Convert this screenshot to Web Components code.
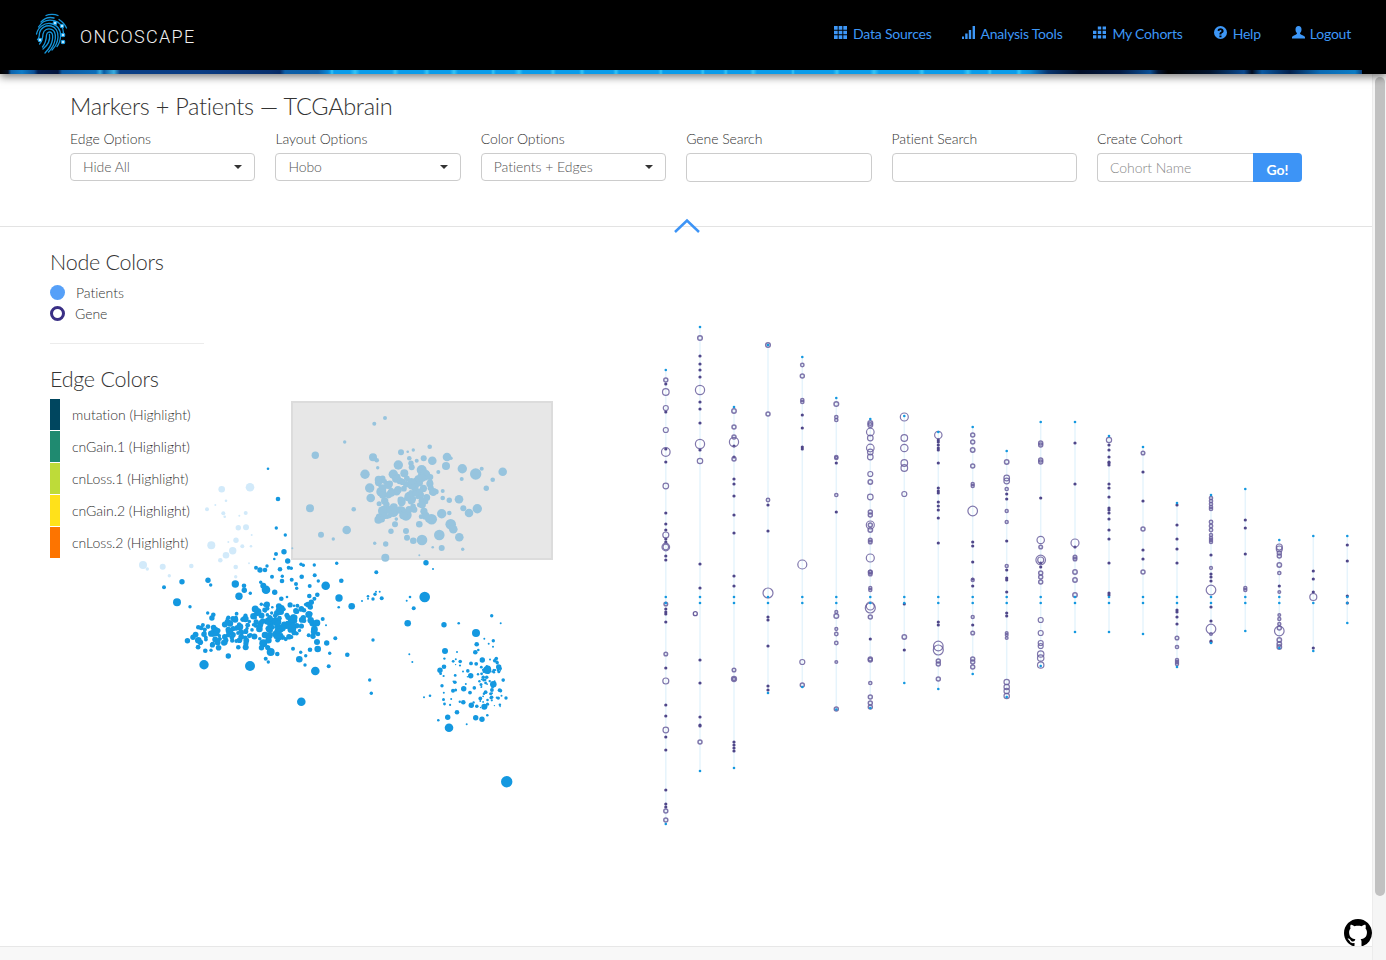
<!DOCTYPE html>
<html>
<head>
<meta charset="utf-8">
<title>Oncoscape</title>
<style>
  html, body { margin: 0; height: 100%; overflow: hidden; background: #fff; }
  body { font-family: "Lato", "Liberation Sans", sans-serif; font-weight: 300; color: #333; }
</style>
</head>
<body>
<onco-app></onco-app>

<script>
// small seeded random so the dense clusters stay the same between runs
function seeded(a) {
  return function () {
    a = (a + 0x6D2B79F5) | 0;
    let t = Math.imul(a ^ (a >>> 15), 1 | a);
    t = (t + Math.imul(t ^ (t >>> 7), 61 | t)) ^ t;
    return ((t ^ (t >>> 14)) >>> 0) / 4294967296;
  };
}

// the thin textured strip under the nav, as one horizontal gradient
function bandGradient() {
  const rnd = seeded(7);
  const stops = ['#000 0', '#020a1c 8px', '#0c62ac 11px', '#0e7cc8 22px', '#0a4f96 34px', '#031c4e 38px', '#03143c 58px', '#0b5aa4 62px', '#0d6db8 96px', '#35a6dc 100px', '#0a5aa0 104px', '#3aaee0 114px', '#0a3f86 120px', '#0a3c84 200px', '#08306e 270px', '#062a66 280px', '#0c5fa8 285px', '#0a5ca6 318px', '#0a86d4 328px'];
  let x = 330;
  while (x < 1020) {
    const w = 4 + rnd() * 6;
    stops.push(`#0a9cea ${x.toFixed(0)}px`, `#35c4f6 ${(x + w / 2).toFixed(0)}px`, `#0a9cea ${(x + w).toFixed(0)}px`);
    x += w + 14 + rnd() * 26;
  }
  stops.push('#0b8ed8 1030px', '#0a6eb8 1036px', '#07346e 1048px', '#020e28 1080px', '#031a44 1120px', '#0a4f96 1150px', '#041634 1158px', '#000 1168px', '#02142e 1210px', '#0a4a90 1244px', '#020a1c 1252px', '#0a5aa4 1262px', '#03204c 1290px', '#0b6ab4 1320px', '#0c7cc4 1355px', '#0a3f7c 1362px');
  return `linear-gradient(90deg, ${stops.join(', ')})`;
}

class OncoNavLink extends HTMLElement {
  constructor() {
    super();
    this.attachShadow({ mode: 'open' });
    this.shadowRoot.innerHTML = `
      <style>
        :host { display: flex; align-items: center; gap: 6px; color: #3d97f7; font-size: 14px; font-weight: 400; letter-spacing: -.22px; }
        ::slotted(svg) { display: block; width: 13px; height: 13px; fill: #3d97f7; flex: none; margin-top: -1px; }
      </style>
      <slot name="icon"></slot><slot></slot>`;
  }
}
customElements.define('onco-nav-link', OncoNavLink);

class OncoNav extends HTMLElement {
  constructor() {
    super();
    this.attachShadow({ mode: 'open' });
    this.shadowRoot.innerHTML = `
      <style>
        :host { display: block; background: #000; position: relative; z-index: 2; box-shadow: 0 3px 8px rgba(0,0,0,.5); }
        .top { height: 70px; display: flex; align-items: flex-start; padding-left: 35px; box-sizing: border-box; }
        .logo { display: block; width: 33px; height: 42px; margin-top: 13px; }
        .brand { color: #f0f0f0; font-family: "Roboto", "Liberation Sans", sans-serif; font-weight: 300; font-size: 18px; letter-spacing: 1.3px; margin: 27px 0 0 12px; line-height: 20px; }
        .links { margin-left: auto; display: flex; gap: 31px; padding: 23px 35px 0 0; height: 20px; }
        .band { height: 4px; margin-right: 24px; background: ${bandGradient()}; }
      </style>
      <div class="top">
        <svg class="logo" viewBox="0 0 33 42" fill="none" stroke="#1594d8" stroke-width="1.300" stroke-linecap="round">
          <path d="M11 2.500C14 1 20 1 23 2.500"/>
          <path d="M6 9C10 4.500 15 4 19 5"/>
          <path d="M24 6.500C27 8.500 30 11 31.500 15"/>
          <path d="M3.500 14C7 8.500 13 6.300 19 7.700C25 9 28 14 28.500 20"/>
          <path d="M1.500 21C3 14 9 10 15 10.500C22 11.200 26 17 25.600 23C25.300 27 24 31 22 33.500"/>
          <path d="M2.500 26.500C3.500 26 4.300 23 4.500 20C5.500 14.500 11 12 16 13C21 14 23.300 19 23 24C22.800 29 20 34 17 37"/>
          <path d="M4.500 31C7 28.500 7.800 24.500 8 21C8.800 16.500 13 15 16.500 16.300C20 17.600 20.700 21.500 20.300 25.500C19.800 30 17.500 35 13.500 39"/>
          <path d="M7.500 34C10 31 11.300 26.500 11.500 22C12 19 15 18.200 16.700 20C18 21.500 17.800 24.500 17.300 27.500C16.500 31.500 14 36 10 40"/>
          <path d="M14.500 21.500C15.300 26.500 13 32 8 36"/>
          <g fill="#bfe8ff" stroke="#1aa0e6" stroke-width="1.100">
            <circle cx="20" cy="10" r="1.800"/><circle cx="27" cy="13" r="1.800"/><circle cx="28" cy="22" r="1.800"/>
            <circle cx="5" cy="27" r="1.800"/><circle cx="28" cy="29" r="1.800"/>
          </g>
        </svg>
        <div class="brand">ONCOSCAPE</div>
        <div class="links">
          <onco-nav-link>
            <svg slot="icon" viewBox="0 0 13 13"><path d="M0 0h3.700v3.700H0zM4.650 0h3.700v3.700H4.650zM9.300 0H13v3.700H9.300zM0 4.650h3.700v3.700H0zM4.650 4.650h3.700v3.700H4.650zM9.300 4.650H13v3.700H9.300zM0 9.300h3.700V13H0zM4.650 9.300h3.700V13H4.650zM9.300 9.300H13V13H9.300z"/></svg>
            Data Sources
          </onco-nav-link>
          <onco-nav-link style="gap:5px">
            <svg slot="icon" viewBox="0 0 13 13"><path d="M0 10.500h2V13H0zM3.200 7.500h2.400V13H3.200zM6.800 4h2.400v9H6.800zM10.600 0H13v13h-2.400z"/></svg>
            Analysis Tools
          </onco-nav-link>
          <onco-nav-link>
            <svg slot="icon" viewBox="0 0 13 13"><path d="M4.800 0.500h3.400V3.500H4.800zM9.600 0.500H13V3.500H9.600zM0 4.700h3.400v3.200H0zM4.800 4.700h3.400v3.200H4.800zM9.600 4.700H13v3.200H9.600zM0 9.200h3.400v3.300H0zM4.800 9.200h3.400v3.300H4.800zM9.600 9.200H13v3.300H9.600z"/></svg>
            My Cohorts
          </onco-nav-link>
          <onco-nav-link>
            <svg slot="icon" viewBox="0 0 13 13"><path fill-rule="evenodd" d="M6.500 0a6.500 6.500 0 1 1 0 13a6.500 6.500 0 0 1 0-13zM5.400 9.400v1.900h2.100V9.400zM6.600 2.300C4.900 2.300 3.900 3.100 3.500 4.500l1.700.7c.2-.7.600-1.100 1.300-1.100c.6 0 1 .3 1 .8c0 .5-.4.800-1 1.200C5.800 6.600 5.400 7.200 5.400 8.500h2c0-.8.300-1 .9-1.400c.8-.5 1.300-1.200 1.300-2.200c0-1.700-1.300-2.600-3-2.600z"/></svg>
            Help
          </onco-nav-link>
          <onco-nav-link style="gap:5px">
            <svg slot="icon" viewBox="0 0 13 13"><path d="M6.500 0C8.500 0 9.500 1.500 9.500 3.400C9.500 5 8.800 6.300 8 7.100C8 8.200 8.800 8.500 10.500 9.200C12 9.800 13 10.300 13 11.300V12.500H0V11.300C0 10.300 1 9.800 2.500 9.200C4.200 8.500 5 8.200 5 7.100C4.200 6.300 3.500 5 3.500 3.400C3.500 1.500 4.500 0 6.500 0z"/></svg>
            Logout
          </onco-nav-link>
        </div>
      </div>
      <div class="band"></div>`;
  }
}
customElements.define('onco-nav', OncoNav);

class OncoField extends HTMLElement {
  constructor() {
    super();
    this.attachShadow({ mode: 'open' });
  }

  connectedCallback() {
    const label = this.getAttribute('label');
    const kind = this.getAttribute('kind');
    const value = this.getAttribute('value') || '';
    let control = '<div class="box"></div>';
    if (kind === 'select') {
      control = `<div class="box select"><span>${value}</span><i></i></div>`;
    }
    if (kind === 'group') {
      control = `<div class="group"><div class="box ph">${value}</div><div class="go">Go!</div></div>`;
    }
    this.shadowRoot.innerHTML = `
      <style>
        :host { display: block; font-size: 14px; color: #333; letter-spacing: -.05px; }
        label { display: block; line-height: 20px; margin: 0 0 4px; }
        .box { height: 29px; box-sizing: border-box; border: 1px solid #ccc; border-radius: 4px; background: #fff; font-size: 14px; line-height: 27px; }
        .select { height: 28px; display: flex; justify-content: space-between; align-items: center; padding: 0 12px 2px 12px; color: #555; }
        .select i { width: 0; height: 0; border-left: 4px solid transparent; border-right: 4px solid transparent; border-top: 4px solid #333; margin-top: 1px; }
        .group { display: flex; width: 205px; }
        .ph { flex: 1; padding-left: 12px; color: #888; border-radius: 4px 0 0 4px; border-right: 0; }
        .go { width: 49px; height: 29px; box-sizing: border-box; background: #3d94f6; color: #fff; font-weight: 700; font-size: 14px; text-align: center; line-height: 33px; border-radius: 0 4px 4px 0; }
      </style>
      <label>${label}</label>
      ${control}`;
  }
}
customElements.define('onco-field', OncoField);

class OncoToolbar extends HTMLElement {
  constructor() {
    super();
    this.attachShadow({ mode: 'open' });
    this.shadowRoot.innerHTML = `
      <style>
        :host { display: block; height: 153px; box-sizing: border-box; padding: 16px 0 0 70px; border-bottom: 1px solid #e3e3e3; position: relative; }
        h1 { font-weight: 300; font-size: 23.500px; line-height: 32px; margin: 0 0 7px 0; color: #333; letter-spacing: -.27px; }
        .row { display: grid; grid-template-columns: repeat(6, 185.400px); column-gap: 20px; }
        .arrow { position: absolute; left: 673px; bottom: -7px; width: 28px; height: 15px; display: block; }
      </style>
      <h1><slot name="title"></slot></h1>
      <div class="row"><slot></slot></div>
      <svg class="arrow" viewBox="0 0 28 15" fill="none" stroke="#3d94f6" stroke-width="2.500"><path d="M2 14L14 2.500L26 14"/></svg>`;
  }
}
customElements.define('onco-toolbar', OncoToolbar);

class OncoLegend extends HTMLElement {
  constructor() {
    super();
    this.attachShadow({ mode: 'open' });
    this.shadowRoot.innerHTML = `
      <style>
        :host { display: block; width: 154px; padding: 20px 0 0 50px; position: relative; z-index: 1; font-size: 14px; color: #333; letter-spacing: -.03px; }
        h2 { font-weight: 300; font-size: 21.500px; line-height: 30px; margin: 0 0 5px; white-space: nowrap; color: #333; letter-spacing: -.25px; }
        .node { display: flex; align-items: center; height: 21px; white-space: nowrap; gap: 10px; }
        .dot { width: 15px; height: 15px; border-radius: 50%; box-sizing: border-box; background: #56a0f8; flex: none; }
        .ring { background: #fff; border: 3px solid #3a2f85; }
        hr { border: 0; border-top: 1px solid #ececec; margin: 19px 0 20px; }
        h2.edge { margin-bottom: 5px; }
        .edge-row { display: flex; align-items: center; gap: 12px; height: 31px; margin-bottom: 1px; white-space: nowrap; }
        .edge-row i { width: 10px; height: 31px; flex: none; }
      </style>
      <h2>Node Colors</h2>
      <div class="node" style="gap:11px"><span class="dot"></span>Patients</div>
      <div class="node"><span class="dot ring"></span>Gene</div>
      <hr>
      <h2 class="edge">Edge Colors</h2>
      <div class="edge-row"><i style="background:#00465f"></i>mutation (Highlight)</div>
      <div class="edge-row"><i style="background:#1f8a70"></i>cnGain.1 (Highlight)</div>
      <div class="edge-row"><i style="background:#bedb39"></i>cnLoss.1 (Highlight)</div>
      <div class="edge-row"><i style="background:#ffe11a"></i>cnGain.2 (Highlight)</div>
      <div class="edge-row"><i style="background:#fd7400"></i>cnLoss.2 (Highlight)</div>`;
  }
}
customElements.define('onco-legend', OncoLegend);

// the plot: free canvas, all coords are measured off the picture
class OncoPlot extends HTMLElement {
  constructor() {
    super();
    this.attachShadow({ mode: 'open' });
  }

  connectedCallback() {
    const out = [];
    const rnd = seeded(2024);
    const gauss = () => (rnd() + rnd() + rnd() - 1.5) / 0.5;
    const dot = (x, y, r, c) => out.push(`<circle cx="${x.toFixed(1)}" cy="${y.toFixed(1)}" r="${r.toFixed(1)}" fill="${c}"/>`);
    const BLUE = '#1498e0';

    // scatter values below are in 3x crop units, origin (130,395)
    const sx = x => 130 + x / 3;
    const sy = y => 395 + y / 3;

    const pale = [[275,283,10],[360,277,13],[288,317,4],[231,343,6],[256,330,3],[280,355,6],[284,365,4],[328,362,3],[347,354,6],[325,398,8],[348,397,9],[365,420,3],[318,436,8],[295,441,3],[244,451,12],[337,454,6],[363,454,4],[308,467,11],[288,481,10],[271,496,7],[39,510,12],[52,522,5],[98,515,9],[184,513,7],[118,542,5],[317,516,7],[317,545,5],[357,505,3]];
    pale.forEach(p => dot(sx(p[0]), sy(p[1]), p[2] / 3, '#d2eafa'));

    const main = [[414,221,4],[444,312,7],[439,399,5],[466,420,5],[438,477,6],[433,492,4],[462,470,8],[473,498,8],[378,518,6],[390,525,8],[405,525,7],[411,513,5],[450,523,7],[476,518,6],[484,520,5],[513,508,5],[520,511,5],[553,510,5],[614,491,4],[620,505,5],[426,545,6],[457,544,5],[456,558,7],[485,554,6],[515,545,7],[554,541,6],[565,558,5],[634,557,7],[498,567,6],[500,580,5],[539,573,6],[587,572,13],[156,560,8],[234,556,8],[242,570,5],[102,577,6],[316,567,11],[342,572,7],[343,586,8],[392,562,5],[400,572,9],[408,584,13],[434,592,8],[361,595,5],[327,604,11],[538,603,7],[562,599,7],[627,609,11],[471,606,4],[454,611,7],[141,622,12],[180,635,5],[544,622,8],[541,636,8],[665,634,10],[626,637,4],[394,628,5],[404,630,5],[233,654,5],[250,659,7],[292,672,5],[318,667,5],[386,645,5],[427,637,4],[454,640,10],[492,632,4],[522,646,7],[541,656,7],[205,697,7],[189,727,8],[205,736,10],[226,767,7],[295,783,8],[222,809,14],[360,813,15],[407,791,6],[415,801,5],[422,771,12],[442,777,7],[489,761,6],[512,772,5],[527,782,5],[508,793,10],[525,810,5],[556,828,13],[596,814,6],[599,775,5],[540,764,7],[563,762,10],[590,744,8],[561,741,9],[616,730,6],[652,779,7],[548,685,10],[578,672,6],[588,691,3],[564,717,7],[549,724,8],[696,618,3],[714,604,4],[714,611,3],[729,612,5],[735,598,5],[749,590,3],[755,610,6],[738,590,3],[830,617,3],[840,606,4],[884,606,16],[851,640,6],[833,685,10],[729,735,5],[838,778,3],[847,801,3],[719,855,5],[724,895,5],[514,920,13],[739,532,6],[888,503,8],[909,522,3],[1130,1160,17],[942,689,8],[986,685,4],[1085,662,5],[1112,685,3],[1038,714,12],[1063,731,3],[1090,737,5],[1076,746,3],[1040,748,7],[1089,755,3],[945,768,9],[981,771,3],[1045,765,4],[1036,772,7],[1057,795,8],[1106,816,8],[1072,825,12],[957,998,13],[925,976,4],[953,967,8],[981,952,7],[1037,968,8],[1056,973,8],[1072,961,4],[1010,988,3],[882,907,3],[900,902,4],[1128,909,5],[930,826,8],[942,815,7],[1022,842,8],[1001,881,8],[969,887,6],[1063,935,9],[1024,931,8],[1000,922,7],[1090,868,10],[1074,820,8],[400,745,12],[405,720,10],[452,650,10],[445,680,9],[520,668,8],[285,742,8],[347,757,9],[325,757,7]];
    main.forEach(p => dot(sx(p[0]), sy(p[1]), p[2] / 3, BLUE));

    // the two dense blobs lower left
    for (let i = 0; i < 70; i++) {
      dot(sx(285 + gauss() * 45), sy(710 + gauss() * 24), (5 + rnd() * 4.5) / 3, BLUE);
    }
    for (let i = 0; i < 130; i++) {
      dot(sx(440 + gauss() * 58), sy(695 + gauss() * 30), (5 + rnd() * 5.5) / 3, BLUE);
    }
    // right cluster
    for (let i = 0; i < 100; i++) {
      const x = 925 + rnd() * 195;
      const y = 790 + rnd() * 150;
      const bias = rnd() < .45 ? 1050 + rnd() * 65 : x;
      dot(sx(bias), sy(y), (2 + rnd() * 3.8) / 3, BLUE);
    }

    // grey brush box, sits on top of the scatter in the real app
    out.push('<rect x="292" y="402" width="260" height="157" fill="#e7e7e7" stroke="#dcdcdc" stroke-width="2"/>');
    const FADED = '#97c4de';
    const faded = [[765,69,6],[733,86,6],[644,141,5],[556,181,11],[813,172,9],[833,170,4],[850,165,5],[899,155,7],[729,187,12],[740,196,7],[838,190,7],[881,190,9],[860,197,6],[907,197,13],[951,186,13],[963,190,5],[843,205,8],[805,210,14],[743,218,5],[845,217,9],[948,213,12],[997,221,14],[1055,221,6],[1037,237,17],[1118,230,13],[705,238,14],[790,238,14],[823,235,12],[875,225,15],[925,231,6],[1088,254,7],[746,254,12],[995,252,6],[1069,280,8],[719,279,14],[540,340,12],[671,343,7],[650,405,13],[573,419,9],[610,432,5],[734,445,5],[767,447,8],[766,488,12],[868,481,3],[998,463,5],[935,459,9],[908,457,4],[487,460,3],[754,290,15],[722,309,13],[764,318,11],[760,348,16],[790,350,16],[828,360,17],[884,240,17],[860,262,15],[829,268,10],[838,305,15],[870,300,12],[987,313,13],[1017,354,13],[1042,341,14],[1000,340,9],[935,356,14],[905,373,16],[962,388,16],[970,403,13],[988,427,13],[928,420,16],[876,435,16],[850,437,10],[831,428,9],[828,408,9],[795,388,9],[783,409,8],[868,388,10],[918,290,8],[938,288,6],[938,309,7],[958,316,8],[958,354,7],[775,270,12],[800,290,11],[815,320,12],[850,265,13],[780,345,12],[810,345,11],[900,260,8]];
    faded.forEach(p => dot(sx(p[0]), sy(p[1]), p[2] / 3, FADED));
    for (let i = 0; i < 90; i++) {
      dot(sx(745 + rnd() * 170), sy(245 + rnd() * 130), (5 + rnd() * 7) / 3, FADED);
    }

    // gene columns: ends are the light blue tick marks, y in page px
    const columns = [
      { x: 665.8, top: 370, end: 824, sp: [597, 603],
        rings: [[380,2],[392,3.3],[408,2.5],[430,2.5],[452,4.3],[486,2.8],[535,3],[547,3.8],[547,2.8],[604,1.8],[654,1.8],[681,3],[730,2.8],[811,2],[820,2]],
        dots: [384,412,449,462,513,524,530,539,542,556,560,609,612,614,622,668,705,716,737,750,790,804,807] },
      { x: 700, top: 327, end: 771, sp: [597, 603],
        rings: [[338,2.3],[390,4.6],[444,4.6],[461,2.7],[742,2]],
        dots: [356,364,370,377,402,409,423,450,564,588,660,683,717,725,726] },
      { x: 734, top: 407, end: 768, sp: [597, 603],
        rings: [[411,2.2],[427,2],[442,4.6],[437,2],[459,2],[670,1.8],[679,2.4],[679,1.500]],
        dots: [446,457,479,484,496,515,533,576,586,742,745,748,751] },
      { x: 768, top: 345, end: 693, sp: [597, 603],
        rings: [[345,2.3],[414,2],[500,1.7],[593,5]],
        dots: [505,531,617,620,646,686,690] },
      { x: 802.3, top: 357, end: 687, sp: [597, 603],
        rings: [[365,1.7],[376,2],[400,1.6],[402,1.6],[564.500,4.5],[662,2.5],[685,2]],
        dots: [415,428,447,449] },
      { x: 836.3, top: 398, end: 709.5, sp: [597, 603],
        rings: [[404,2.3],[417,1.6],[420,1.6],[457,1.6],[458,1.6],[495,1.6],[612,1.4],[616,2.3],[629,1.4],[634,1.7],[643,1.7],[662,1.3],[709,2]],
        dots: [463,512] },
      { x: 870.3, top: 419, end: 708, sp: [597, 603],
        rings: [[423,2.3],[425,2.3],[432,3.8],[438,2.8],[448,3.8],[452,2.8],[457,2.8],[474,2.5],[482,2.2],[497,2.8],[512,2],[515,2],[525,4],[525,2],[530,2.2],[540,1.8],[542,1.8],[558,4],[572,1.8],[574,1.8],[572,1.8],[588,1.500],[590,1.500],[608,5],[606,4],[617,2],[659,2],[660,2],[683,1.6],[697,2],[703,2],[707,2]],
        dots: [639] },
      { x: 904.3, top: 416, end: 683, sp: [597, 603],
        rings: [[417,4],[438,3.3],[448,3.7],[463,3.3],[468,3.3],[494,2.5],[637,2.2]],
        dots: [604,650] },
      { x: 938.3, top: 432, end: 689, sp: [597, 603],
        rings: [[435,3.7],[646,4.8],[650,5],[661,2],[664,2],[679,2]],
        dots: [440,442,445,448,450,463,488,491,493,502,506,510,518,543,622,625] },
      { x: 972.7, top: 427, end: 674, sp: [597, 603],
        rings: [[435,2],[442,2],[450,2.2],[466,2],[484,1.5],[486,1.5],[511,4.8],[580,1.500],[617,1.500],[633,1.8],[659,2],[662,2],[667,2]],
        dots: [542,546,562,579,586,625] },
      { x: 1006.7, top: 451, end: 697, sp: [597, 603],
        rings: [[462,2.2],[478,2.8],[481,2.8],[489,1.6],[511,1.5],[522,1.5],[566,1.5],[633,1.3],[635,1.3],[638,1.3],[682,2.7],[687,2.7],[691,2.7],[696,2.7]],
        dots: [494,499,541,570,578,580,592,613,616] },
      { x: 1040.7, top: 422, end: 666, sp: [597, 603],
        rings: [[443,2],[445,2],[460,2],[462,2],[540,3.7],[547,1.8],[560,4.8],[560,3],[573,2],[577,2],[582,2],[620,2.5],[633,2.5],[643,2.5],[646,2.5],[654,3.2],[658,3.2],[665,3.2]],
        dots: [498,563,567] },
      { x: 1075, top: 422, end: 632, sp: [597, 603],
        rings: [[543,4],[557,1.8],[559,1.8],[572,2.2],[580,2.2],[595,2.2]],
        dots: [443,484,547] },
      { x: 1109, top: 436, end: 632, sp: [597, 603],
        rings: [[440,2.6]],
        dots: [445,450,457,462,463,465,484,488,497,508,510,513,519,530,539,563,593,595] },
      { x: 1143, top: 447, end: 634, sp: [597, 603],
        rings: [[453,1.8],[529,2],[572,2]],
        dots: [472,501,550,559] },
      { x: 1177, top: 503, end: 667, sp: [597, 603],
        rings: [[638,1.8],[647,1.6],[660,1.5],[662,1.500],[664,1.500]],
        dots: [505,525,539,549,563,610,612,617,624] },
      { x: 1211, top: 495, end: 643, sp: [597, 603],
        rings: [[498,1.6],[501,1.6],[504,1.6],[507,1.6],[509,1.6],[522,1.7],[526,1.7],[530,1.7],[535,1.5],[538,1.5],[540,1.5],[542,1.5],[568,1.4],[590,4.8],[629,4.8],[634,1.3]],
        dots: [555,574,577,581,607,621,641,642] },
      { x: 1245.3, top: 489, end: 631, sp: [597, 603],
        rings: [[588,1.5],[590,1.5]],
        dots: [520,528,554] },
      { x: 1279.3, top: 540, end: 648, sp: [597, 603],
        rings: [[547,3],[549,3],[553,2],[556,2],[565,2.2],[573,1.6],[592,1.3],[615,1.3],[619,1.500],[624,1.500],[628,2],[631,4.8],[640,2.2],[644,2.2],[647,2.2]],
        dots: [586] },
      { x: 1313.3, top: 536, end: 651, sp: [603],
        rings: [[597,3.5]],
        dots: [571,579,592,648] },
      { x: 1347.3, top: 536, end: 623, sp: [597, 603],
        rings: [],
        dots: [545,561,596,603] }
    ];

    columns.forEach(col => {
      out.push(`<line x1="${col.x}" x2="${col.x}" y1="${col.top}" y2="${col.end}" stroke="#e6f4fc" stroke-width="1.500"/>`);
      col.dots.forEach(y => dot(col.x, y, 1.6, '#4f4689'));
      col.rings.forEach(r => out.push(`<circle cx="${col.x}" cy="${r[0]}" r="${r[1]}" fill="none" stroke="#6a5f9e" stroke-width="${r[1] < 2.5 ? 1.5 : 1.2}" stroke-opacity=".85"/>`));
      [col.top, col.end].concat(col.sp).forEach(y => dot(col.x, y, 1.3, BLUE));
    });
    // the one gene that sits off its line
    out.push('<circle cx="695.300" cy="613.700" r="2" fill="none" stroke="#6a5f9e" stroke-width="1.300"/>');

    this.shadowRoot.innerHTML = `
      <style>
        :host { display: block; position: absolute; left: 0; top: -74px; width: 1372px; height: 960px; pointer-events: none; }
        svg { display: block; }
      </style>
      <svg width="1372" height="960" viewBox="0 0 1372 960">${out.join('')}</svg>`;
  }
}
customElements.define('onco-plot', OncoPlot);

class OncoApp extends HTMLElement {
  constructor() {
    super();
    this.attachShadow({ mode: 'open' });
    this.shadowRoot.innerHTML = `
      <style>
        :host { display: flex; flex-direction: column; height: 960px; overflow: hidden; position: relative; }
        .body { flex: 1; display: flex; min-height: 0; }
        .page { flex: 1; display: flex; flex-direction: column; min-width: 0; border-right: 1px solid #ececec; position: relative; }
        .work { flex: 1; position: relative; }
        .foot { height: 13px; background: #f8f8f8; border-top: 1px solid #e7e7e7; position: relative; z-index: 1; }
        .bar { width: 13px; flex: none; box-sizing: border-box; padding: 3px 1px 0 2px; background: #f5f5f5; }
        .thumb { height: 819px; background: #c1c1c1; border-radius: 5px; }
        .git { position: absolute; left: 1344px; bottom: -1px; width: 28px; height: 28px; display: block; fill: #000; }
      </style>
      <onco-nav></onco-nav>
      <div class="body">
        <div class="page">
          <onco-toolbar>
            <span slot="title">Markers + Patients — TCGAbrain</span>
            <onco-field label="Edge Options" kind="select" value="Hide All"></onco-field>
            <onco-field label="Layout Options" kind="select" value="Hobo"></onco-field>
            <onco-field label="Color Options" kind="select" value="Patients + Edges"></onco-field>
            <onco-field label="Gene Search" kind="input"></onco-field>
            <onco-field label="Patient Search" kind="input"></onco-field>
            <onco-field label="Create Cohort" kind="group" value="Cohort Name"></onco-field>
          </onco-toolbar>
          <div class="work">
            <onco-legend></onco-legend>
            <svg class="git" viewBox="0 0 16 16"><path d="M8 0C3.580 0 0 3.580 0 8c0 3.540 2.290 6.530 5.470 7.590.4.070.55-.17.55-.38 0-.19-.01-.82-.01-1.490-2.010.37-2.530-.49-2.690-.94-.09-.23-.48-.94-.82-1.130-.28-.15-.68-.52-.01-.53.63-.01 1.080.58 1.230.82.72 1.210 1.870.87 2.330.66.070-.52.28-.87.51-1.070-1.780-.2-3.640-.89-3.640-3.950 0-.87.31-1.590.82-2.150-.08-.2-.36-1.020.08-2.120 0 0 .67-.21 2.200.82.64-.18 1.320-.27 2-.27.68 0 1.360.09 2 .27 1.530-1.040 2.200-.82 2.200-.82.44 1.100.16 1.920.08 2.120.51.56.82 1.270.82 2.150 0 3.070-1.870 3.750-3.650 3.950.29.25.54.73.54 1.480 0 1.070-.01 1.930-.01 2.200 0 .21.15.46.55.38A8.013 8.013 0 0 0 16 8c0-4.420-3.580-8-8-8z"/></svg>
          </div>
          <div class="foot"></div>
          <onco-plot></onco-plot>
        </div>
        <div class="bar"><div class="thumb"></div></div>
      </div>`;
  }
}
customElements.define('onco-app', OncoApp);
</script>
</body>
</html>
